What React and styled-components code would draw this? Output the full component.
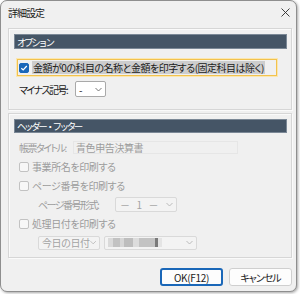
import React from 'react'
import styled, { createGlobalStyle } from 'styled-components'

const Global = createGlobalStyle`
  html, body { margin: 0; padding: 0; background: #ffffff; }
  body { width: 300px; height: 294px; overflow: hidden; }
`

const Window = styled.div`
  width: 297px;
  height: 292px;
  box-sizing: border-box;
  background: #f0f0f0;
  border: 1px solid #8e8e8e;
  border-radius: 7px;
  box-shadow: 1px 1px 3px rgba(0, 0, 0, 0.35);
  display: flex;
  flex-direction: column;
  font-family: "Noto Sans CJK JP", "Noto Sans", sans-serif;
  font-size: 10px;
  font-feature-settings: "palt";
  letter-spacing: -0.4px;
  color: #1b1b1b;
  overflow: hidden;
`

const TitleBar = styled.div`
  height: 22px;
  flex-shrink: 0;
  display: flex;
  align-items: center;
  justify-content: space-between;
  padding: 0 6px 0 7px;
  letter-spacing: -1px;
`

const Content = styled.div`
  display: flex;
  flex-direction: column;
  gap: 3px;
  padding: 5px 4px 0 7px;
`

const Group = styled.div`
  border: 1px solid #d6d6d6;
  box-shadow: inset 1px 1px 0 #fafafa, 1px 1px 0 #fafafa;
  padding: 5px 4px ${p => p.$bottom}px 5px;
  display: flex;
  flex-direction: column;
`

const GroupHeader = styled.div`
  height: ${p => p.$h}px;
  background: #455566;
  color: #ffffff;
  display: flex;
  align-items: center;
  padding-left: 3px;
  font-size: 9.5px;
  font-feature-settings: normal;
  letter-spacing: -2.4px;
  box-shadow: 0 0 0 1px #7b8896 inset;
`

const FocusRow = styled.div`
  margin: 10px 10px 0 3px;
  height: 17px;
  box-sizing: border-box;
  border: 1px solid #f2c24d;
  box-shadow: 0 0 0 1px #fbe7b0;
  display: flex;
  align-items: center;
  gap: 3px;
  padding-left: 1px;
`

const Box = styled.span`
  width: 10px;
  height: 10px;
  box-sizing: border-box;
  flex-shrink: 0;
  border-radius: 2px;
  border: 1px solid ${p => (p.$checked ? '#1a67b8' : '#c2c2c2')};
  background: ${p => (p.$checked ? '#1a67b8' : '#f7f7f7')};
  display: flex;
  align-items: center;
  justify-content: center;
`

const Highlight = styled.span`
  background: #cdcdcd;
  padding: 0 1px;
  line-height: 13px;
  letter-spacing: -0.5px;
`

const Row = styled.div`
  height: ${p => p.$h || 19}px;
  margin-top: ${p => p.$mt || 0}px;
  padding-left: ${p => p.$indent}px;
  display: flex;
  align-items: center;
  gap: ${p => p.$gap ?? 3}px;
  color: ${p => (p.$disabled ? '#9c9c9c' : '#1b1b1b')};
  white-space: nowrap;
`

const Label = styled.span`
  width: ${p => p.$w}px;
  flex-shrink: 0;
  white-space: nowrap;
  letter-spacing: -1.5px;
`

const Select = styled.div`
  width: ${p => p.$w}px;
  height: ${p => p.$h}px;
  box-sizing: border-box;
  flex-shrink: 0;
  background: ${p => (p.$disabled ? '#f3f3f3' : '#ffffff')};
  border: 1px solid ${p => (p.$disabled ? '#d9d9d9' : '#a9a9a9')};
  border-radius: 2px;
  display: flex;
  align-items: center;
  justify-content: space-between;
  padding: 0 3px 0 3px;
  color: ${p => (p.$disabled ? '#a3a3a3' : '#1b1b1b')};
`

const Spaced = styled.span`
  word-spacing: 5px;
  padding-left: 1px;
`

const TextField = styled.div`
  width: 165px;
  height: 13px;
  box-sizing: border-box;
  border: 1px solid #e6e6e6;
  background: #f0f0f0;
  display: flex;
  align-items: center;
  padding-left: 2px;
  color: #9c9c9c;
`

const Mosaic = styled.div`
  display: flex;
  height: 9px;
`

const Tile = styled.span`
  width: ${p => p.$w}px;
  height: 9px;
  background: ${p => p.$c};
`

const Buttons = styled.div`
  display: flex;
  justify-content: flex-end;
  gap: 6px;
  margin-top: 7px;
`

const Button = styled.button`
  width: 63px;
  height: 18px;
  box-sizing: border-box;
  border-radius: 3px;
  background: #fdfdfd;
  border: ${p => (p.$primary ? '2px solid #1a67b8' : '1px solid #cfcfcf')};
  font-family: inherit;
  font-size: 10px;
  font-feature-settings: "palt";
  letter-spacing: ${p => (p.$primary ? '-0.3px' : '-1px')};
  color: #1b1b1b;
  padding: 0;
`

const Chevron = ({ color = '#6a6a6a' }) => (
  <svg width="7" height="5" viewBox="0 0 7 5">
    <path d="M0.5 1 L3.5 4 L6.5 1" fill="none" stroke={color} strokeWidth="0.9" />
  </svg>
)

const Check = () => (
  <svg width="8" height="8" viewBox="0 0 8 8">
    <path d="M1.3 4.2 L3.2 6 L6.8 2" fill="none" stroke="#ffffff" strokeWidth="1.2" />
  </svg>
)

const Close = () => (
  <svg width="9" height="9" viewBox="0 0 9 9">
    <path d="M0.5 0.5 L8.5 8.5 M8.5 0.5 L0.5 8.5" stroke="#2a2a2a" strokeWidth="0.9" />
  </svg>
)

const tiles = [
  [5, '#dadada'], [7, '#c2c2c2'], [4, '#d6d6d6'], [9, '#bdbdbd'], [6, '#dcdcdc'],
  [16, '#c3c3c3'], [3, '#7a7a7a'], [4, '#e4e4e4'],
]

export default function App() {
  return (
    <>
      <Global />
      <Window>
        <TitleBar>
          <span>詳細設定</span>
          <Close />
        </TitleBar>
        <Content>
          <Group $bottom={12}>
            <GroupHeader $h={15}>オプション</GroupHeader>
            <FocusRow>
              <Box $checked><Check /></Box>
              <Highlight>金額が0の科目の名称と金額を印字する(固定科目は除く)</Highlight>
            </FocusRow>
            <Row $h={16} $mt={5} $indent={5} $gap={0}>
              <Label $w={56}>マイナス記号:</Label>
              <Select $w={31} $h={16}>
                <span>-</span>
                <Chevron />
              </Select>
            </Row>
          </Group>
          <Group $bottom={5}>
            <GroupHeader $h={14}>ヘッダー・フッター</GroupHeader>
            <Row $mt={5} $indent={5} $gap={0} $disabled>
              <Label $w={54}>帳票タイトル:</Label>
              <TextField>青色申告決算書</TextField>
            </Row>
            <Row $indent={5} $disabled>
              <Box />
              <span>事業所名を印刷する</span>
            </Row>
            <Row $indent={5} $disabled>
              <Box />
              <span>ページ番号を印刷する</span>
            </Row>
            <Row $indent={24} $gap={0} $disabled>
              <Label $w={77}>ページ番号形式:</Label>
              <Select $w={62} $h={15} $disabled>
                <Spaced>－ 1 －</Spaced>
                <Chevron color="#b5b5b5" />
              </Select>
            </Row>
            <Row $indent={5} $disabled>
              <Box />
              <span>処理日付を印刷する</span>
            </Row>
            <Row $indent={24} $gap={4} $disabled>
              <Select $w={62} $h={14} $disabled>
                <span>今日の日付</span>
                <Chevron color="#b5b5b5" />
              </Select>
              <Select $w={93} $h={14} $disabled>
                <Mosaic>
                  {tiles.map(([w, c], i) => (
                    <Tile key={i} $w={w} $c={c} />
                  ))}
                </Mosaic>
                <Chevron color="#b5b5b5" />
              </Select>
            </Row>
          </Group>
          <Buttons>
            <Button $primary>OK(F12)</Button>
            <Button>キャンセル</Button>
          </Buttons>
        </Content>
      </Window>
    </>
  )
}
